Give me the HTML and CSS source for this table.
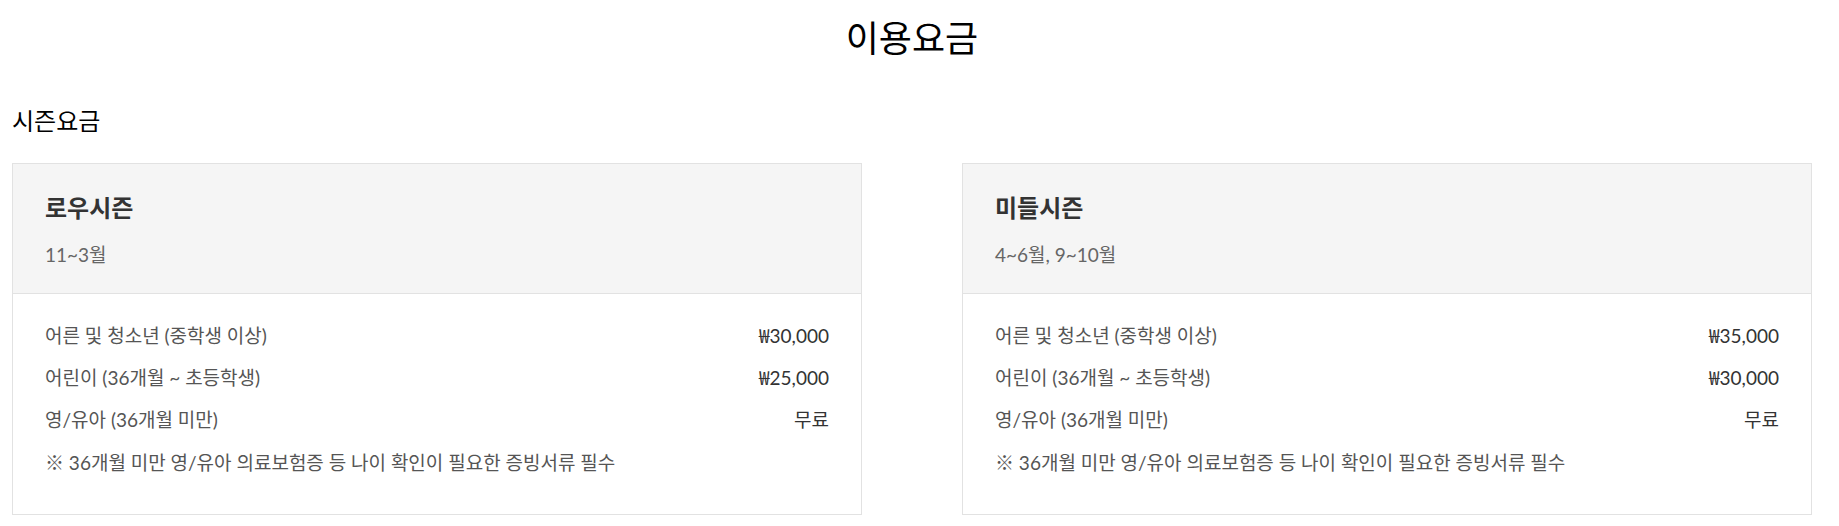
FILE: index.html
```html
<!DOCTYPE html>
<html lang="ko">
<head>
<meta charset="utf-8">
<title>이용요금</title>
<link rel="stylesheet" href="styles.css">
</head>
<body>
<main class="page">
  <h1 class="page-title">이용요금</h1>
  <h2 class="section-title">시즌요금</h2>
  <div class="cards">
    <section class="card">
      <header class="card-head">
        <h3 class="card-title">로우시즌</h3>
        <p class="card-period">11~3월</p>
      </header>
      <div class="card-body">
        <div class="row"><span class="label">어른 및 청소년 (중학생 이상)</span><span class="price"><span class="won">₩</span>30,000</span></div>
        <div class="row"><span class="label">어린이 (36개월 ~ 초등학생)</span><span class="price"><span class="won">₩</span>25,000</span></div>
        <div class="row"><span class="label">영/유아 (36개월 미만)</span><span class="price">무료</span></div>
        <p class="note">※ 36개월 미만 영/유아 의료보험증 등 나이 확인이 필요한 증빙서류 필수</p>
      </div>
    </section>
    <section class="card">
      <header class="card-head">
        <h3 class="card-title">미들시즌</h3>
        <p class="card-period">4~6월, 9~10월</p>
      </header>
      <div class="card-body">
        <div class="row"><span class="label">어른 및 청소년 (중학생 이상)</span><span class="price"><span class="won">₩</span>35,000</span></div>
        <div class="row"><span class="label">어린이 (36개월 ~ 초등학생)</span><span class="price"><span class="won">₩</span>30,000</span></div>
        <div class="row"><span class="label">영/유아 (36개월 미만)</span><span class="price">무료</span></div>
        <p class="note">※ 36개월 미만 영/유아 의료보험증 등 나이 확인이 필요한 증빙서류 필수</p>
      </div>
    </section>
  </div>
</main>
</body>
</html>
```
FILE: styles.css
```css
* { box-sizing: border-box; }
html, body { margin: 0; padding: 0; background: #fff; }
body {
  font-family: Lato, "Noto Sans CJK KR", sans-serif;
  color: #111;
}
.page {
  width: 1800px;
  margin-left: 12px;
  padding-top: 11px;
}
.page-title {
  margin: 0;
  font-family: "Noto Sans CJK KR", sans-serif;
  font-weight: 400;
  font-size: 36px;
  line-height: 50px;
  text-align: center;
  color: #000;
}
.section-title {
  margin: 41px 0 0;
  font-family: "Noto Sans CJK KR", sans-serif;
  font-weight: 400;
  font-size: 24px;
  line-height: 36px;
  color: #000;
}
.cards {
  margin-top: 25px;
  display: grid;
  grid-template-columns: 850px 850px;
  column-gap: 100px;
}
.card {
  border: 1px solid #e2e2e2;
  background: #fff;
}
.card-head {
  background: #f5f5f5;
  border-bottom: 1px solid #e2e2e2;
  padding: 26px 32px 25px;
}
.card-title {
  margin: 0;
  font-size: 24px;
  line-height: 36px;
  font-weight: 700;
  color: #333;
}
.card-period {
  margin: 15px 0 0;
  font-size: 19px;
  line-height: 27px;
  color: #666;
}
.card-body {
  padding: 28px 32px 38px;
  display: flex;
  flex-direction: column;
  gap: 15px;
}
.row {
  display: flex;
  justify-content: space-between;
  font-size: 19px;
  line-height: 27px;
}
.label { color: #555; }
.price { color: #333; }
.won {
  font-family: "Noto Sans CJK KR", sans-serif;
  line-height: 0;
}
.note {
  margin: 1px 0 0;
  font-size: 19px;
  line-height: 27px;
  color: #555;
}
```
